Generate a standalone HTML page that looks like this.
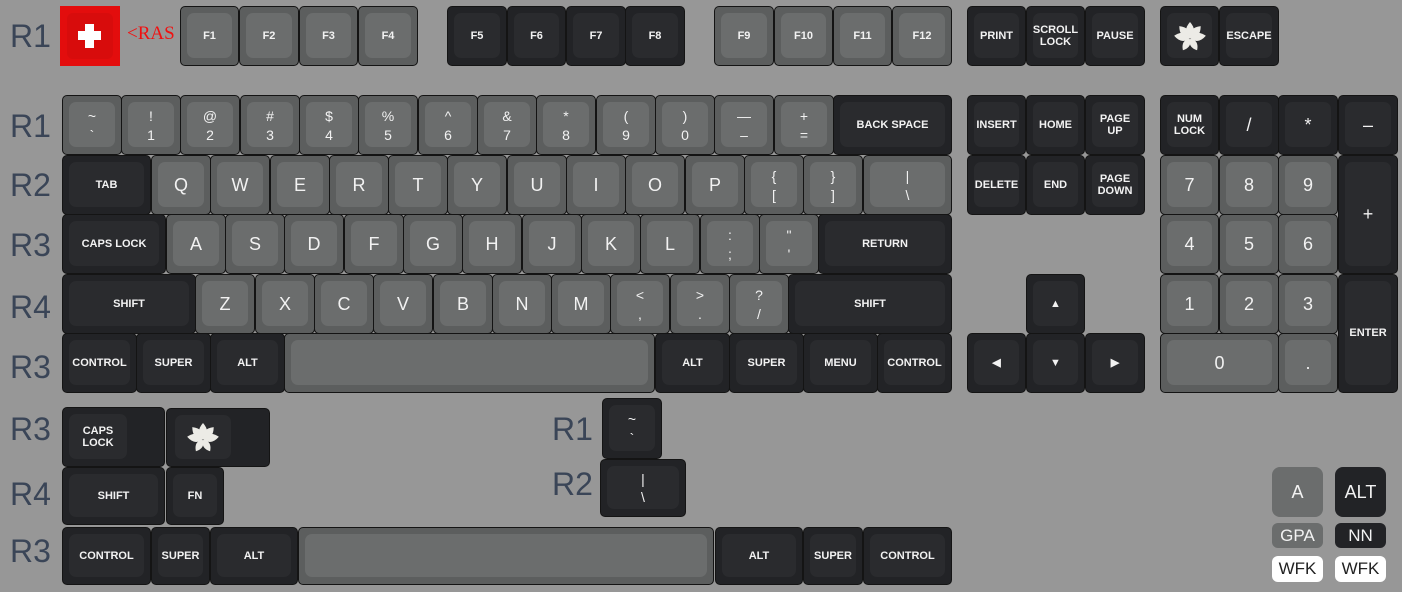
<!DOCTYPE html>
<html><head><meta charset="utf-8"><style>
*{margin:0;padding:0;box-sizing:border-box}
body{width:1402px;height:592px;background:#979797;position:relative;overflow:hidden;font-family:"Liberation Sans",sans-serif}
.k{position:absolute;height:60px;border:1px solid #141414;border-radius:5px;background:#5c5e5e}
.k.d{background:#222326}
.k .c{position:absolute;left:6px;right:6px;top:6px;bottom:7px;border-radius:7px;background:#6b6d6d;color:#f2f2f2;display:flex;align-items:center;justify-content:center;text-align:center;font-size:18px;line-height:1}
.k.d .c{background:#2a2b2e}
.s{font-size:11px!important;font-weight:bold;line-height:12px!important}
.t{flex-direction:column;justify-content:space-around!important;padding:4px 0 3px;font-size:14px!important}
.r{position:absolute;left:10px;font-size:32px;color:#3a4557;line-height:1}
</style></head><body>
<svg width="0" height="0" style="position:absolute"><defs><g id="lotus" fill="#ecebe6"><path id="pt" d="M0,4 Q-8,-3 0,-12 Q8,-3 0,4Z"/><use href="#pt" transform="rotate(-42 0 4)"/><use href="#pt" transform="rotate(42 0 4)"/><use href="#pt" transform="rotate(-82 0 4)"/><use href="#pt" transform="rotate(82 0 4)"/><use href="#pt" transform="rotate(-150 0 4) scale(0.85)"/><use href="#pt" transform="rotate(150 0 4) scale(0.85)"/></g></defs></svg>
<div class="r" style="top:20px">R1</div>
<div class="r" style="top:110px">R1</div>
<div class="r" style="top:169px">R2</div>
<div class="r" style="top:229px">R3</div>
<div class="r" style="top:291px">R4</div>
<div class="r" style="top:351px">R3</div>
<div class="r" style="top:413px">R3</div>
<div class="r" style="top:478px">R4</div>
<div class="r" style="top:535px">R3</div>
<div class="r" style="top:413px;left:552px">R1</div>
<div class="r" style="top:468px;left:552px">R2</div>

<div style="position:absolute;left:60px;top:6px;width:60px;height:60px;background:#e30d0d"><div style="position:absolute;left:7px;top:7px;width:46px;height:46px;border-radius:6px;background:#d80c0c"></div></div>
<div style="position:absolute;left:85px;top:24px;width:9px;height:24px;background:#fff"></div>
<div style="position:absolute;left:78px;top:31px;width:23px;height:9px;background:#fff"></div>
<div style="position:absolute;left:127px;top:24px;color:#f01010;font-family:'Liberation Serif',serif;font-size:19px;line-height:1">&lt;RAS</div>

<div class="k" style="left:180px;top:6px;width:59px"><div class="c s">F1</div></div>
<div class="k" style="left:239px;top:6px;width:60px"><div class="c s">F2</div></div>
<div class="k" style="left:299px;top:6px;width:59px"><div class="c s">F3</div></div>
<div class="k" style="left:358px;top:6px;width:60px"><div class="c s">F4</div></div>
<div class="k d" style="left:447px;top:6px;width:60px"><div class="c s">F5</div></div>
<div class="k d" style="left:507px;top:6px;width:59px"><div class="c s">F6</div></div>
<div class="k d" style="left:566px;top:6px;width:60px"><div class="c s">F7</div></div>
<div class="k d" style="left:625px;top:6px;width:60px"><div class="c s">F8</div></div>
<div class="k" style="left:714px;top:6px;width:60px"><div class="c s">F9</div></div>
<div class="k" style="left:774px;top:6px;width:59px"><div class="c s">F10</div></div>
<div class="k" style="left:833px;top:6px;width:59px"><div class="c s">F11</div></div>
<div class="k" style="left:892px;top:6px;width:60px"><div class="c s">F12</div></div>
<div class="k d" style="left:967px;top:6px;width:59px"><div class="c s">PRINT</div></div>
<div class="k d" style="left:1026px;top:6px;width:59px"><div class="c s">SCROLL<br>LOCK</div></div>
<div class="k d" style="left:1085px;top:6px;width:60px"><div class="c s">PAUSE</div></div>
<div class="k d" style="left:1160px;top:6px;width:59px"><div class="c"><svg width="34" height="32" viewBox="-17 -14 34 32"><use href="#lotus"/></svg></div></div>
<div class="k d" style="left:1219px;top:6px;width:60px"><div class="c s">ESCAPE</div></div>

<div class="k" style="left:62px;top:95px;width:60px"><div class="c t"><span>~</span><span>`</span></div></div>
<div class="k" style="left:121px;top:95px;width:60px"><div class="c t"><span>!</span><span>1</span></div></div>
<div class="k" style="left:180px;top:95px;width:60px"><div class="c t"><span>@</span><span>2</span></div></div>
<div class="k" style="left:240px;top:95px;width:60px"><div class="c t"><span>#</span><span>3</span></div></div>
<div class="k" style="left:299px;top:95px;width:60px"><div class="c t"><span>$</span><span>4</span></div></div>
<div class="k" style="left:358px;top:95px;width:60px"><div class="c t"><span>%</span><span>5</span></div></div>
<div class="k" style="left:418px;top:95px;width:60px"><div class="c t"><span>^</span><span>6</span></div></div>
<div class="k" style="left:477px;top:95px;width:60px"><div class="c t"><span>&amp;</span><span>7</span></div></div>
<div class="k" style="left:536px;top:95px;width:60px"><div class="c t"><span>*</span><span>8</span></div></div>
<div class="k" style="left:596px;top:95px;width:60px"><div class="c t"><span>(</span><span>9</span></div></div>
<div class="k" style="left:655px;top:95px;width:60px"><div class="c t"><span>)</span><span>0</span></div></div>
<div class="k" style="left:714px;top:95px;width:60px"><div class="c t"><span>—</span><span>–</span></div></div>
<div class="k" style="left:774px;top:95px;width:60px"><div class="c t"><span>+</span><span>=</span></div></div>
<div class="k d" style="left:833px;top:95px;width:119px"><div class="c s">BACK SPACE</div></div>

<div class="k d" style="left:62px;top:155px;width:89px"><div class="c s">TAB</div></div>
<div class="k" style="left:151px;top:155px;width:60px"><div class="c">Q</div></div>
<div class="k" style="left:210px;top:155px;width:60px"><div class="c">W</div></div>
<div class="k" style="left:270px;top:155px;width:60px"><div class="c">E</div></div>
<div class="k" style="left:329px;top:155px;width:60px"><div class="c">R</div></div>
<div class="k" style="left:388px;top:155px;width:60px"><div class="c">T</div></div>
<div class="k" style="left:447px;top:155px;width:60px"><div class="c">Y</div></div>
<div class="k" style="left:507px;top:155px;width:60px"><div class="c">U</div></div>
<div class="k" style="left:566px;top:155px;width:60px"><div class="c">I</div></div>
<div class="k" style="left:625px;top:155px;width:60px"><div class="c">O</div></div>
<div class="k" style="left:685px;top:155px;width:60px"><div class="c">P</div></div>
<div class="k" style="left:744px;top:155px;width:60px"><div class="c t"><span>{</span><span>[</span></div></div>
<div class="k" style="left:803px;top:155px;width:60px"><div class="c t"><span>}</span><span>]</span></div></div>
<div class="k" style="left:863px;top:155px;width:89px"><div class="c t"><span>|</span><span>\</span></div></div>

<div class="k d" style="left:62px;top:214px;width:104px"><div class="c s">CAPS LOCK</div></div>
<div class="k" style="left:166px;top:214px;width:60px"><div class="c">A</div></div>
<div class="k" style="left:225px;top:214px;width:60px"><div class="c">S</div></div>
<div class="k" style="left:284px;top:214px;width:60px"><div class="c">D</div></div>
<div class="k" style="left:344px;top:214px;width:60px"><div class="c">F</div></div>
<div class="k" style="left:403px;top:214px;width:60px"><div class="c">G</div></div>
<div class="k" style="left:462px;top:214px;width:60px"><div class="c">H</div></div>
<div class="k" style="left:522px;top:214px;width:60px"><div class="c">J</div></div>
<div class="k" style="left:581px;top:214px;width:60px"><div class="c">K</div></div>
<div class="k" style="left:640px;top:214px;width:60px"><div class="c">L</div></div>
<div class="k" style="left:700px;top:214px;width:60px"><div class="c t"><span>:</span><span>;</span></div></div>
<div class="k" style="left:759px;top:214px;width:60px"><div class="c t"><span>"</span><span>'</span></div></div>
<div class="k d" style="left:818px;top:214px;width:134px"><div class="c s">RETURN</div></div>

<div class="k d" style="left:62px;top:274px;width:134px"><div class="c s">SHIFT</div></div>
<div class="k" style="left:195px;top:274px;width:60px"><div class="c">Z</div></div>
<div class="k" style="left:255px;top:274px;width:60px"><div class="c">X</div></div>
<div class="k" style="left:314px;top:274px;width:60px"><div class="c">C</div></div>
<div class="k" style="left:373px;top:274px;width:60px"><div class="c">V</div></div>
<div class="k" style="left:433px;top:274px;width:60px"><div class="c">B</div></div>
<div class="k" style="left:492px;top:274px;width:60px"><div class="c">N</div></div>
<div class="k" style="left:551px;top:274px;width:60px"><div class="c">M</div></div>
<div class="k" style="left:610px;top:274px;width:60px"><div class="c t"><span>&lt;</span><span>,</span></div></div>
<div class="k" style="left:670px;top:274px;width:60px"><div class="c t"><span>&gt;</span><span>.</span></div></div>
<div class="k" style="left:729px;top:274px;width:60px"><div class="c t"><span>?</span><span>/</span></div></div>
<div class="k d" style="left:788px;top:274px;width:164px"><div class="c s">SHIFT</div></div>

<div class="k d" style="left:62px;top:333px;width:75px"><div class="c s">CONTROL</div></div>
<div class="k d" style="left:136px;top:333px;width:75px"><div class="c s">SUPER</div></div>
<div class="k d" style="left:210px;top:333px;width:75px"><div class="c s">ALT</div></div>
<div class="k" style="left:284px;top:333px;width:371px"><div class="c"></div></div>
<div class="k d" style="left:655px;top:333px;width:75px"><div class="c s">ALT</div></div>
<div class="k d" style="left:729px;top:333px;width:75px"><div class="c s">SUPER</div></div>
<div class="k d" style="left:803px;top:333px;width:75px"><div class="c s">MENU</div></div>
<div class="k d" style="left:877px;top:333px;width:75px"><div class="c s">CONTROL</div></div>

<div class="k d" style="left:967px;top:95px;width:59px"><div class="c s">INSERT</div></div>
<div class="k d" style="left:1026px;top:95px;width:59px"><div class="c s">HOME</div></div>
<div class="k d" style="left:1085px;top:95px;width:60px"><div class="c s">PAGE<br>UP</div></div>
<div class="k d" style="left:967px;top:155px;width:59px"><div class="c s">DELETE</div></div>
<div class="k d" style="left:1026px;top:155px;width:59px"><div class="c s">END</div></div>
<div class="k d" style="left:1085px;top:155px;width:60px"><div class="c s">PAGE<br>DOWN</div></div>
<div class="k d" style="left:1026px;top:274px;width:59px"><div class="c s">▲</div></div>
<div class="k d" style="left:967px;top:333px;width:59px"><div class="c s">◀</div></div>
<div class="k d" style="left:1026px;top:333px;width:59px"><div class="c s">▼</div></div>
<div class="k d" style="left:1085px;top:333px;width:60px"><div class="c s">▶</div></div>

<div class="k d" style="left:1160px;top:95px;width:59px"><div class="c s">NUM<br>LOCK</div></div>
<div class="k d" style="left:1219px;top:95px;width:60px"><div class="c">/</div></div>
<div class="k d" style="left:1278px;top:95px;width:60px"><div class="c">*</div></div>
<div class="k d" style="left:1338px;top:95px;width:60px"><div class="c">–</div></div>
<div class="k" style="left:1160px;top:155px;width:59px"><div class="c">7</div></div>
<div class="k" style="left:1219px;top:155px;width:60px"><div class="c">8</div></div>
<div class="k" style="left:1278px;top:155px;width:60px"><div class="c">9</div></div>
<div class="k d" style="left:1338px;top:155px;width:60px;height:119px"><div class="c">+</div></div>
<div class="k" style="left:1160px;top:214px;width:59px"><div class="c">4</div></div>
<div class="k" style="left:1219px;top:214px;width:60px"><div class="c">5</div></div>
<div class="k" style="left:1278px;top:214px;width:60px"><div class="c">6</div></div>
<div class="k" style="left:1160px;top:274px;width:59px"><div class="c">1</div></div>
<div class="k" style="left:1219px;top:274px;width:60px"><div class="c">2</div></div>
<div class="k" style="left:1278px;top:274px;width:60px"><div class="c">3</div></div>
<div class="k d" style="left:1338px;top:274px;width:60px;height:119px"><div class="c s">ENTER</div></div>
<div class="k" style="left:1160px;top:333px;width:119px"><div class="c">0</div></div>
<div class="k" style="left:1278px;top:333px;width:60px"><div class="c">.</div></div>

<div class="k d" style="left:62px;top:407px;width:103px;height:60px"><div class="c s" style="right:37px">CAPS<br>LOCK</div></div>
<div class="k d" style="left:166px;top:408px;width:104px;height:59px"><div class="c" style="left:8px;right:38px"><svg width="34" height="32" viewBox="-17 -14 34 32"><use href="#lotus"/></svg></div></div>
<div class="k d" style="left:62px;top:467px;width:103px;height:58px"><div class="c s">SHIFT</div></div>
<div class="k d" style="left:166px;top:467px;width:58px;height:58px"><div class="c s">FN</div></div>
<div class="k d" style="left:62px;top:527px;width:89px;height:58px"><div class="c s">CONTROL</div></div>
<div class="k d" style="left:151px;top:527px;width:59px;height:58px"><div class="c s">SUPER</div></div>
<div class="k d" style="left:210px;top:527px;width:88px;height:58px"><div class="c s">ALT</div></div>
<div class="k" style="left:298px;top:527px;width:416px;height:58px"><div class="c"></div></div>
<div class="k d" style="left:715px;top:527px;width:88px;height:58px"><div class="c s">ALT</div></div>
<div class="k d" style="left:803px;top:527px;width:60px;height:58px"><div class="c s">SUPER</div></div>
<div class="k d" style="left:863px;top:527px;width:89px;height:58px"><div class="c s">CONTROL</div></div>
<div class="k d" style="left:602px;top:398px;width:60px;height:61px"><div class="c t"><span>~</span><span>`</span></div></div>
<div class="k d" style="left:600px;top:459px;width:86px;height:58px"><div class="c t"><span>|</span><span>\</span></div></div>

<div style="position:absolute;left:1272px;top:467px;width:51px;height:50px;border-radius:8px;background:#6b6d6d;color:#f2f2f2;font-size:18px;text-align:center;line-height:50px">A</div>
<div style="position:absolute;left:1335px;top:467px;width:51px;height:50px;border-radius:8px;background:#222326;color:#f2f2f2;font-size:18px;text-align:center;line-height:50px">ALT</div>
<div style="position:absolute;left:1272px;top:523px;width:51px;height:25px;border-radius:6px;background:#6b6d6d;color:#f2f2f2;font-size:17px;text-align:center;line-height:25px">GPA</div>
<div style="position:absolute;left:1335px;top:523px;width:51px;height:25px;border-radius:6px;background:#222326;color:#f2f2f2;font-size:17px;text-align:center;line-height:25px">NN</div>
<div style="position:absolute;left:1272px;top:556px;width:51px;height:26px;border-radius:6px;background:#fff;color:#222;font-size:17px;text-align:center;line-height:26px">WFK</div>
<div style="position:absolute;left:1335px;top:556px;width:51px;height:26px;border-radius:6px;background:#fff;color:#222;font-size:17px;text-align:center;line-height:26px">WFK</div>
</body></html>
